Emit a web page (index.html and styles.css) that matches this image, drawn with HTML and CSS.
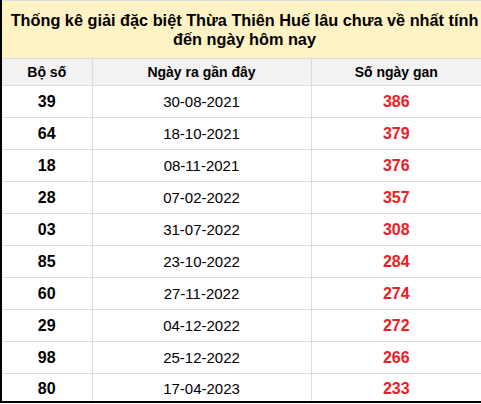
FILE: index.html
```html
<!DOCTYPE html>
<html>
<head>
<meta charset="utf-8">
<link rel="stylesheet" href="styles.css">
</head>
<body>
<table class="gan">
  <colgroup><col class="c1"><col class="c2"><col class="c3"></colgroup>
  <thead>
    <tr><th colspan="3" class="title">Thống kê giải đặc biệt Thừa Thiên Huế lâu chưa về nhất tính đến ngày hôm nay</th></tr>
    <tr class="head"><th>Bộ số</th><th>Ngày ra gần đây</th><th>Số ngày gan</th></tr>
  </thead>
  <tbody>
    <tr><td class="num">39</td><td class="date">30-08-2021</td><td class="days">386</td></tr>
    <tr><td class="num">64</td><td class="date">18-10-2021</td><td class="days">379</td></tr>
    <tr><td class="num">18</td><td class="date">08-11-2021</td><td class="days">376</td></tr>
    <tr><td class="num">28</td><td class="date">07-02-2022</td><td class="days">357</td></tr>
    <tr><td class="num">03</td><td class="date">31-07-2022</td><td class="days">308</td></tr>
    <tr><td class="num">85</td><td class="date">23-10-2022</td><td class="days">284</td></tr>
    <tr><td class="num">60</td><td class="date">27-11-2022</td><td class="days">274</td></tr>
    <tr><td class="num">29</td><td class="date">04-12-2022</td><td class="days">272</td></tr>
    <tr><td class="num">98</td><td class="date">25-12-2022</td><td class="days">266</td></tr>
    <tr class="last"><td class="num">80</td><td class="date">17-04-2023</td><td class="days">233</td></tr>
  </tbody>
</table>
</body>
</html>
```
FILE: styles.css
```css
html, body {
  margin: 0;
  padding: 0;
  background: #fff;
}
.gan {
  width: 481px;
  border-collapse: collapse;
  font-family: "Liberation Sans", Arial, sans-serif;
  color: #000;
  border-left: 2px solid #000;
  border-right: 2px solid #000;
  border-bottom: 2px solid #000;
  table-layout: fixed;
}
.c1 { width: 91px; }
.c2 { width: 219px; }
.c3 { width: 171px; }
.gan th, .gan td {
  border: 1px solid #dcdcdc;
  text-align: center;
  padding: 0;
}
.title {
  background: #fff3c6;
  font-size: 16.3px;
  font-weight: bold;
  line-height: 19px;
  height: 57px;
  padding-left: 6px !important;
  border-top: 1px solid #dcdcdc;
}
.head th {
  background: #f2f2f2;
  font-size: 14px;
  font-weight: bold;
  height: 26px;
}
.gan td {
  height: 31px;
}
.gan .last td {
  height: 25px;
  padding-top: 2px;
}
.num {
  font-size: 16px;
  font-weight: bold;
}
.date {
  font-size: 15px;
}
.days {
  font-size: 16px;
  font-weight: bold;
  color: #ed1c24;
}
```
